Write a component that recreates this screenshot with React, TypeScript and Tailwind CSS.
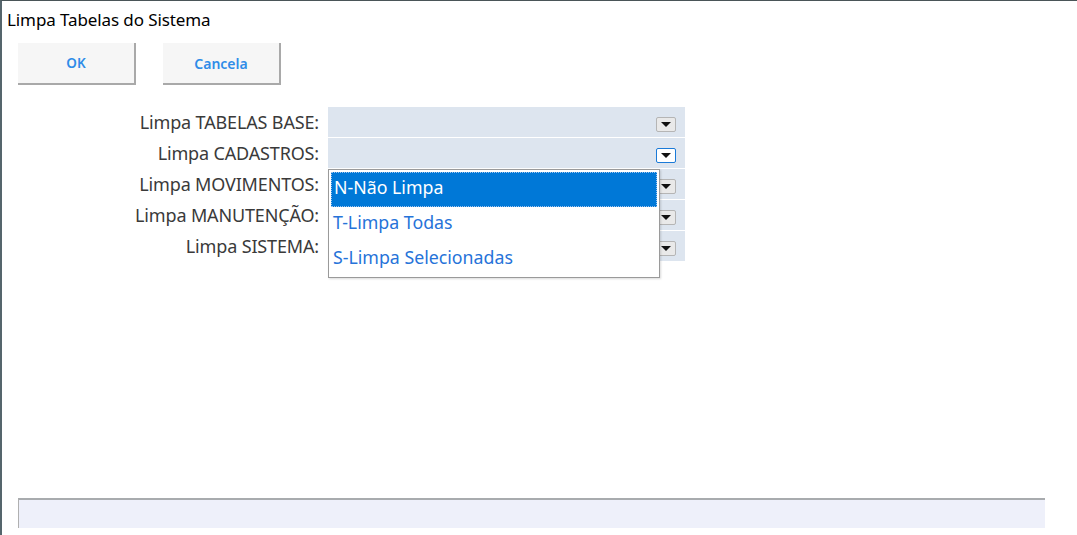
const ROWS = [
  'Limpa TABELAS BASE:',
  'Limpa CADASTROS:',
  'Limpa MOVIMENTOS:',
  'Limpa MANUTENÇÃO:',
  'Limpa SISTEMA:',
];

const OPTIONS = ['N-Não Limpa', 'T-Limpa Todas', 'S-Limpa Selecionadas'];

function Caret({ focused }: { focused?: boolean }) {
  return (
    <span
      className={`flex h-[15px] w-[20px] items-center justify-center rounded-[2px] border ${
        focused ? 'border-[#1a7ad8] bg-white' : 'border-[#b5b5b5] bg-[#e9e9e9]'
      }`}
    >
      <svg width="10" height="5" viewBox="0 0 10 5">
        <path d="M0 0h10L5 5z" fill="#111" />
      </svg>
    </span>
  );
}

export default function App() {
  return (
    <div
      className="relative h-[535px] w-[1077px] overflow-hidden border-l-2 border-t border-l-[#55656c] border-t-[#4a5558] bg-white"
      style={{ fontFamily: '"Noto Sans", "Open Sans", sans-serif' }}
    >
      {/* Title */}
      <div className="pl-[5px] pt-[8px] text-[17px] leading-[22px] text-black" style={{ letterSpacing: '-0.1px' }}>
        Limpa Tabelas do Sistema
      </div>

      {/* Buttons */}
      <div className="ml-[16px] mt-[12px] flex gap-[27px]">
        <button className="h-[42px] w-[118px] border-b-2 border-r-2 border-b-[#a9a9a9] border-r-[#a9a9a9] bg-[#f6f6f6] text-[13.5px] font-semibold text-[#2f8ce8]">
          OK
        </button>
        <button className="h-[42px] w-[118px] border-b-2 border-r-2 border-b-[#a9a9a9] border-r-[#a9a9a9] bg-[#f6f6f6] text-[14px] font-semibold text-[#2f8ce8]">
          Cancela
        </button>
      </div>

      {/* Form */}
      <div className="relative mt-[22px] flex flex-col gap-[1px]">
        {ROWS.map((label, i) => (
          <div key={label} className="flex h-[30px] items-center">
            <div className="w-[317px] text-right text-[18px] text-[#3a3a3a]" style={{ letterSpacing: '-0.15px' }}>
              {label}
            </div>
            <div className="ml-[9px] flex h-full w-[357px] items-end justify-end bg-[#dde5ef] pb-[5px] pr-[9px]">
              <Caret focused={i === 1} />
            </div>
          </div>
        ))}

        {/* Open dropdown list */}
        <div className="absolute left-[326px] top-[62px] w-[332px] border border-[#9a9a9a] bg-white px-[2px] pt-[2px] shadow-[1px_1px_2px_rgba(0,0,0,0.15)]">
          {OPTIONS.map((opt, i) => (
            <div
              key={opt}
              className={`flex h-[35px] items-center px-[2px] pb-[5px] text-[17.75px] ${
                i === 0 ? 'border border-dotted border-[#9ec4ee] bg-[#0078d7] text-white' : 'text-[#2673d9]'
              }`}
            >
              {opt}
            </div>
          ))}
        </div>
      </div>

      {/* Status bar */}
      <div className="absolute left-[16px] top-[497px] h-[30px] w-[1027px] border-l border-t-2 border-l-[#b0b0b0] border-t-[#a8abae] bg-[#eef0fa]" />
    </div>
  );
}
